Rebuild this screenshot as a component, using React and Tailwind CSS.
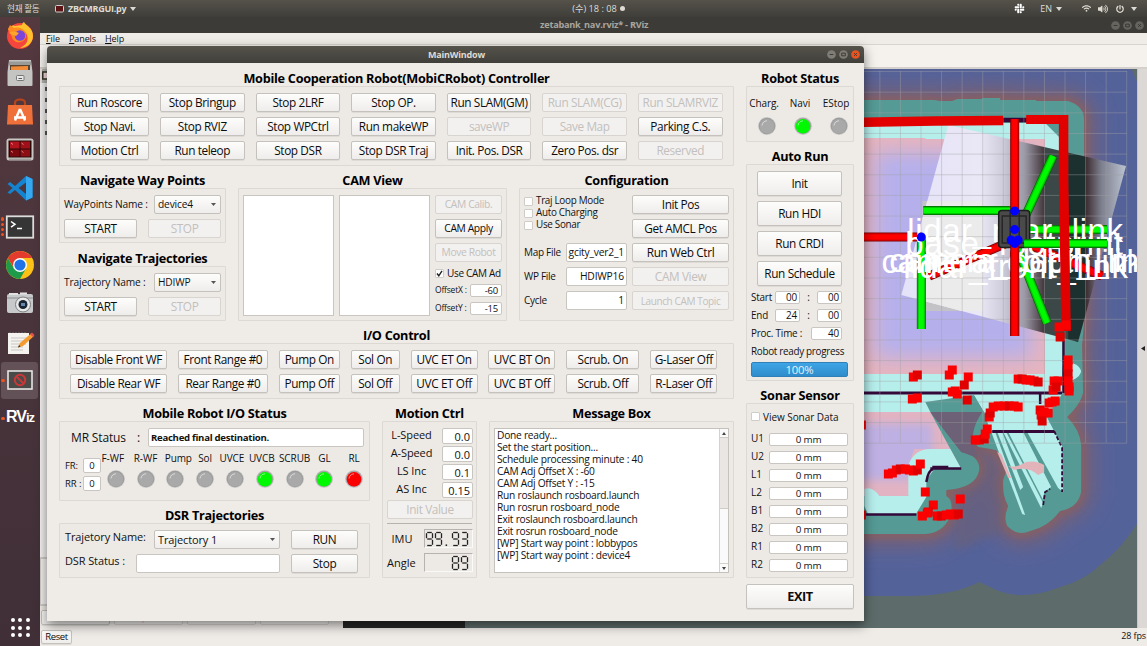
import React from "react";
import { FaSlack, FaPowerOff, FaVolumeUp, FaWifi } from "react-icons/fa";

/* ---------- small controls ---------- */

function Title({ children, className = "" }) {
  return (
    <div className={"h-4 leading-[17.500px] text-center font-bold text-[12.700px] tracking-[-0.280px] text-black whitespace-nowrap " + className}>
      {children}
    </div>
  );
}

function Frame({ children, className = "" }) {
  return <div className={"border border-[#dcd9d5] bg-[#edeae6] rounded-[1px] " + className}>{children}</div>;
}

function Btn({ children, off, className = "" }) {
  const size = /(^|\s)h-/.test(className) ? "" : "h-[19px] ";
  const font = /text-\[/.test(className) ? "" : "text-[11.8px] ";
  return (
    <button
      className={
        "flex shrink-0 items-center justify-center whitespace-nowrap rounded-[2px] border leading-none tracking-[-0.380px] " +
        size +
        font +
        (off
          ? "border-[#d8d5d1] bg-[#f3f1ef] text-[#c2c0bd] "
          : "border-[#c5c2be] bg-gradient-to-b from-[#fdfdfc] to-[#efedeb] text-[#0c0c0c] shadow-[0_1px_0_#dedbd7] ") +
        className
      }
    >
      {children}
    </button>
  );
}

function Field({ children, className = "" }) {
  return (
    <div
      className={
        "flex shrink-0 items-center overflow-hidden whitespace-nowrap rounded-[2px] border border-[#c9c6c2] bg-white leading-none text-[#111] " +
        className
      }
    >
      {children}
    </div>
  );
}

function Select({ children, className = "" }) {
  return (
    <div
      className={
        "flex h-[19px] shrink-0 items-center justify-between whitespace-nowrap rounded-[2px] border border-[#c5c2be] bg-gradient-to-b from-[#fdfdfc] to-[#efedeb] pl-[3px] pr-1 leading-none text-[#111] " +
        className
      }
    >
      <span>{children}</span>
      <svg width="5" height="3" viewBox="0 0 5 3">
        <path d="M0 0h5L2.5 3z" fill="#555" />
      </svg>
    </div>
  );
}

function Check({ children, on, className = "" }) {
  return (
    <div className={"flex items-center whitespace-nowrap leading-none text-[#111] " + className}>
      <span className="mr-[3px] flex h-[9px] w-[9px] shrink-0 items-center justify-center rounded-[1px] border border-[#d0cdc9] bg-white">
        {on && (
          <svg width="7" height="7" viewBox="0 0 7 7">
            <path d="M1 3.5L2.8 5.8L6 .8" fill="none" stroke="#222" strokeWidth="1.4" />
          </svg>
        )}
      </span>
      {children}
    </div>
  );
}

const LED = { gray: "#a9a9a9", green: "#00f800", red: "#fb0000" };

function Led({ c = "gray" }) {
  return (
    <svg width="20" height="20" viewBox="0 0 20 20" className="shrink-0">
      <circle cx="10" cy="10" r="9" fill="#cfcecc" />
      <circle cx="10" cy="10" r="8.3" fill={c === "gray" ? "#9c9c9c" : "#a8a4a8"} />
      <circle cx="10" cy="10.3" r="7.3" fill={LED[c]} />
      <path d="M5 9.5C5.4 6.5 7.5 5 10 4.8" fill="none" stroke="#fff" strokeOpacity=".55" strokeWidth="1" />
    </svg>
  );
}

const SEG = {
  a: "M1.2 .5h4.6",
  b: "M6.5 1.2v5",
  c: "M6.5 7.8v5",
  d: "M1.2 13.5h4.6",
  e: "M.5 7.8v5",
  f: "M.5 1.2v5",
  g: "M1.2 7h4.6",
};
const DIGIT = { 9: "abcdfg", 3: "abcdg", 8: "abcdefg" };

function Lcd({ value }) {
  return (
    <div className="flex h-[19px] w-[49px] items-center justify-end gap-[1.8px] border border-b-[#fafafa] border-r-[#fafafa] border-l-[#b5b2af] border-t-[#b5b2af] pr-1">
      {value.split("").map((ch, i) => (
        <svg key={i} width="7" height="14" viewBox="0 0 7 14" className="overflow-visible">
          {ch === "." ? (
            <rect x="2.6" y="12.4" width="1.5" height="1.6" fill="#222" />
          ) : (
            DIGIT[ch].split("").map((s) => <path key={s} d={SEG[s]} stroke="#222" strokeWidth="1.3" />)
          )}
        </svg>
      ))}
    </div>
  );
}

/* ---------- desktop chrome ---------- */

function Caret() {
  return (
    <svg width="6" height="4" viewBox="0 0 6 4">
      <path d="M0 0h6L3 4z" fill="#dcdad6" />
    </svg>
  );
}

function TopBar() {
  return (
    <div className="flex h-[17px] shrink-0 items-center bg-gradient-to-b from-[#55524a] to-[#3f3e39] text-[9px] leading-none text-[#dfdbd2]">
      <span className="ml-[7px] w-[48px] whitespace-nowrap font-['Noto_Sans_CJK_KR'] text-[8.600px] tracking-[-0.200px]">현재 활동</span>
      <svg width="9" height="8" viewBox="0 0 9 8">
        <rect x=".5" y=".5" width="8" height="6.5" rx="1" fill="#5c1414" stroke="#d0d0d0" />
      </svg>
      <span className="ml-1 mr-1 text-[9px] font-bold tracking-[-0.250px]">ZBCMRGUI.py</span>
      <Caret />
      <span className="ml-[436px] whitespace-nowrap font-['Open_Sans','Noto_Sans_CJK_KR'] text-[9.2px]">(수) 18 : 08</span>
      <span className="ml-[3px] h-[5px] w-[5px] rounded-full bg-[#dfdbd2]" />
      <span className="flex-1" />
      <FaSlack size={11} color="#fff" />
      <span className="ml-[15px] mr-1">EN</span>
      <Caret />
      <FaWifi size={9} className="ml-5" />
      <FaVolumeUp size={10} className="ml-[7px]" />
      <FaPowerOff size={8} className="ml-[8px] mr-[7px]" />
      <Caret />
      <span className="w-[10px]" />
    </div>
  );
}

const ICONS = [
  <g key="firefox">
    <circle cx="14" cy="15" r="13" fill="#f4463c" />
    <path d="M2 9C4 4 8 4 9 5L16 4C16 2 18 1 18 1C20 5 27 7 27 15C27 22 21 27 14 27C20 24 23 20 21 14C19 8 10 6 2 9z" fill="#ffc02e" />
    <path d="M2 8L4 4L8 7C14 5 21 9 20 16C17 24 7 22 6 16z" fill="#ff8a1f" />
    <circle cx="14" cy="14.5" r="5.3" fill="#7a45d8" />
    <path d="M3 12C7 9 10 11 13 12L10 15L7 14z" fill="#ffa52c" />
  </g>,
  <g key="files">
    <path d="M3 1h22l1.5 12v13a1 1 0 0 1-1 1h-23a1 1 0 0 1-1-1v-13z" fill="#c2c2c0" />
    <path d="M3 2.500h22v4h-22z" fill="#9a9a98" />
    <path d="M4 6h20v6h-20z" fill="#5b4432" />
    <path d="M5 7.500l17-.5v4h-17z" fill="#f28c38" />
    <path d="M2 11h24v15h-24z" fill="#c4c4c2" />
    <rect x="10.500" y="16.500" width="7.500" height="5" rx="1" fill="#e8e8e8" stroke="#777" />
    <path d="M12.500 19.500h3.500" stroke="#555" />
  </g>,
  <g key="software">
    <path d="M9 9V5Q9 1.5 14 1.5T19 5V9" fill="none" stroke="#b8441c" strokeWidth="2.2" />
    <path d="M2 7h24l1 19.500h-26z" fill="#f0703a" />
    <path d="M14 11l-5 11.500M14 11l5 11.500M8 19.500h12" fill="none" stroke="#fff" strokeWidth="2.4" />
  </g>,
  <g key="terminator">
    <rect x=".5" y="2.500" width="27" height="22" rx="2.500" fill="#c9c7c3" />
    <rect x="2.500" y="4.500" width="23" height="17" fill="#2a0808" />
    <rect x="4" y="5.500" width="9.500" height="7" fill="#b0141e" />
    <rect x="14.500" y="5.500" width="9.500" height="7" fill="#a01018" />
    <rect x="4" y="13.500" width="9.500" height="7" fill="#7a0a10" />
    <rect x="14.500" y="13.500" width="9.500" height="7" fill="#8e0e16" />
    <path d="M5 7l2 1.500M15.500 7l2 1.500M5 15l2 1.500M15.500 15l2 1.500" stroke="#f99" strokeWidth=".8" />
    <path d="M3 23.200h22" stroke="#7d7b78" strokeWidth=".8" />
  </g>,
  <g key="vscode">
    <path d="M20 2L26.500 5V23.500L20 26.500L9 16L4 20L1.500 18.500L6.500 14L1.500 10L4 8L9 12z" fill="#1484d0" />
    <path d="M20 8.500V20L12.500 14z" fill="#4b353c" />
    <path d="M20 2L26.500 5V23.500L20 26.500z" fill="#35a8ef" />
  </g>,
  <g key="terminal">
    <rect x=".8" y="3.300" width="26.400" height="21.400" fill="#353535" stroke="#dcdcda" strokeWidth="1.800" />
    <path d="M5 8.500l4 2.800l-4 2.800M11 15.500h5" fill="none" stroke="#fff" strokeWidth="1.500" />
  </g>,
  <g key="chrome">
    <circle cx="14" cy="14" r="14" fill="#fbc116" />
    <path d="M1.900 7A14 14 0 0 0 14 28L20 17.500L14 14L8 17.500z" fill="#1e9a4b" />
    <path d="M14 7H26.100A14 14 0 0 0 1.900 7L8 17z" fill="#e33b2e" />
    <circle cx="14" cy="14" r="7" fill="#fff" />
    <circle cx="14" cy="14" r="5.600" fill="#1f72e8" />
  </g>,
  <g key="camera">
    <rect x="1" y="5" width="26" height="19" rx="2" fill="#c7c9cb" />
    <path d="M3 4h9v2h-9zM14 3.500h7v2h-7z" fill="#e2e2e2" />
    <path d="M1 9h26" stroke="#8c8e90" />
    <circle cx="17" cy="15.500" r="7.500" fill="#e8e9ea" stroke="#7d7d7d" />
    <circle cx="17" cy="15.500" r="4.500" fill="#1c2630" />
    <rect x="15" y="14" width="4" height="3" fill="#6488b0" />
  </g>,
  <g key="notes">
    <rect x="2" y="5" width="21" height="21" fill="#f4f3ef" />
    <path d="M4 5v-1M7 5v-1M10 5v-1M13 5v-1M16 5v-1M19 5v-1" stroke="#777" strokeWidth="1" />
    <path d="M5 10h15M5 13h15M5 16h15M5 19h12M5 22h12" stroke="#c5c3bf" strokeWidth=".9" />
    <path d="M12 19.500L14 15L25 5.500L28 8L17 18z" fill="#f59a2e" />
    <path d="M24 6.300L26 4.500L28.500 7L27 9z" fill="#e05050" />
    <path d="M12 19.500l1-2.400l1.600 1.500z" fill="#333" />
  </g>,
  <g key="denied">
    <rect x="2" y="5" width="24" height="18" fill="#4a4a48" stroke="#f0efed" strokeWidth="1.500" />
    <circle cx="14" cy="14" r="5.200" fill="none" stroke="#c83838" strokeWidth="2" />
    <path d="M10.500 10.500l7 7" stroke="#c83838" strokeWidth="2" />
  </g>,
];

function Dock() {
  return (
    <div className="flex w-10 shrink-0 flex-col bg-gradient-to-b from-[#54393f] via-[#49343b] to-[#402f37] pb-[9px]">
      {ICONS.map((icon, i) => (
        <div key={i} className="relative flex h-[38.3px] shrink-0 items-center justify-center">
          {i === 9 && <span className="absolute left-[1px] top-0 h-[37px] w-[37px] rounded-[3px] bg-white/15" />}
          <svg width="28" height="28" viewBox="0 0 28 28" className="relative -mt-[2px] overflow-visible">
            {icon}
          </svg>
          {i === 5 && (
            <span className="absolute left-[1px] top-[9px] flex flex-col gap-[2px]">
              {[0, 1, 2, 3].map((k) => (
                <span key={k} className="h-[3.200px] w-[3.200px] rounded-full bg-[#e95420]" />
              ))}
            </span>
          )}
          {i === 9 && <span className="absolute left-[1px] top-[17px] h-[3.500px] w-[3.500px] rounded-full bg-[#e95420]" />}
        </div>
      ))}
      <div className="relative flex h-[38px] shrink-0 items-center justify-center">
        <span className="absolute left-[1px] top-[17px] h-[3.500px] w-[3.500px] rounded-full bg-[#e95420]" />
        <span className="-mt-1 font-['Liberation_Sans'] text-[16px] font-bold leading-none tracking-[-1px] text-white">
          RV<span className="text-[13px]">iz</span>
        </span>
      </div>
      <div className="flex-1" />
      <div className="mx-auto grid grid-cols-3 gap-x-[3.500px] gap-y-[3.500px]">
        {Array.from({ length: 9 }, (_, k) => (
          <span key={k} className="h-[4px] w-[4px] rounded-full bg-white" />
        ))}
      </div>
    </div>
  );
}

function WinButtons({ live }) {
  return (
    <div className="flex items-center gap-[3px]">
      {["M3 5h4", "M3 3.500h4v3h-4z", "M3.500 3.500l3 3M6.500 3.500l-3 3"].map((d, i) => (
        <svg key={i} width="9" height="9" viewBox="0 0 10 10">
          <circle cx="5" cy="5" r="4.800" fill={live && i === 2 ? "#e8541f" : live ? "#7f7d76" : "#66645f"} />
          <path d={d} fill="none" stroke="#35342f" strokeWidth="1" />
        </svg>
      ))}
    </div>
  );
}

/* ---------- 3D map ---------- */

const PTS = [
  [913, 377], [917, 375], [949, 375], [952, 370], [968, 377], [964, 385], [952, 392], [957, 394], [955, 391], [967, 400],
  [912, 399], [917, 398],
  [1018, 379], [1022, 379], [1026, 380], [1030, 380], [1034, 381], [1038, 382],
  [1054, 381], [1058, 381], [1053, 390], [1056, 387],
  [1049, 403], [1052, 402], [1055, 401], [1040, 410], [1044, 412], [1048, 413], [1041, 415], [1042, 421],
  [888, 474], [892, 473], [896, 470], [900, 469], [905, 469], [909, 470], [913, 471], [917, 470], [920, 464],
  [925, 492], [933, 505], [928, 512], [922, 516], [927, 513], [937, 516], [941, 516], [946, 515], [950, 514], [954, 515], [958, 514], [960, 499],
  [975, 440], [979, 440], [984, 439], [987, 429], [985, 434], [989, 417], [990, 413], [993, 407], [998, 406], [1004, 406], [1009, 406], [1014, 406], [1018, 407],
  [1059, 327], [1060, 337], [1066, 325], [1068, 360], [1068, 367], [1068, 374], [1068, 381], [1069, 387], [1069, 391],
  [861, 515], [861, 425],
];

function Axis({ x1, y1, x2, y2, c }) {
  return (
    <g>
      <line x1={x1} y1={y1} x2={x2} y2={y2} stroke={c === "r" ? "#7a0000" : "#006400"} strokeWidth="9" />
      <line x1={x1} y1={y1} x2={x2} y2={y2} stroke={c === "r" ? "#d80000" : "#00c800"} strokeWidth="7.600" />
      <line x1={x1} y1={y1} x2={x2} y2={y2} stroke={c === "r" ? "#ff0000" : "#00fa00"} strokeWidth="5" />
    </g>
  );
}

const TEAL =
  "M400 100H934L940 101H952L957 99H982V98H1000V100H1036V101H1068Q1084 106 1084 120V322L1082 345L1083 393Q1080 405 1067 417Q1080 430 1081 445V492Q1078 508 1060 511Q1048 527 1030 531Q1018 537 1007 526Q1003 518 1008 506Q1002 496 1003 480Q1006 470 1008 468L996 450Q976 447 973 434Q974 418 985 412H930L961 452Q980 456 979 470Q976 488 946 490V496Q954 500 950 516Q943 533 925 534H400z";

function MapView() {
  return (
    <svg className="block h-[559px] w-full" viewBox="464 69 673 559" preserveAspectRatio="none">
      <defs>
        <filter id="soft" x="-10%" y="-10%" width="120%" height="120%">
          <feGaussianBlur stdDeviation="10" />
        </filter>
        <filter id="soft2" x="-20%" y="-20%" width="140%" height="140%">
          <feGaussianBlur stdDeviation="4" />
        </filter>
        <linearGradient id="cam" gradientUnits="userSpaceOnUse" x1="901" x2="1126" y1="0" y2="0">
          <stop offset="0" stopColor="#e4e2f8" />
          <stop offset=".35" stopColor="#eae8f6" />
          <stop offset=".45" stopColor="#cfcddc" />
          <stop offset=".55" stopColor="#9b98a6" />
          <stop offset=".635" stopColor="#43373c" />
          <stop offset=".64" stopColor="#3b4847" />
          <stop offset=".74" stopColor="#3b4847" />
          <stop offset=".745" stopColor="#1c302f" />
          <stop offset=".815" stopColor="#1c302f" />
          <stop offset=".82" stopColor="#3a2a2e" />
          <stop offset=".89" stopColor="#7d7f8e" />
          <stop offset="1" stopColor="#bcc3d0" />
        </linearGradient>
        <clipPath id="quad">
          <path d="M948 125L1126 166L1078 342L901 295z" />
        </clipPath>
        <clipPath id="blueArea">
          <path d="M400 60H1128L1137 82V524Q1120 550 1100 565Q1085 580 1060 587Q1022 602 994 589L979 582Q950 597 900 596H400z" />
        </clipPath>
        <clipPath id="room">
          <path d="M850 138H925V139H1045V374H850z" />
        </clipPath>
        <clipPath id="room2">
          <path d="M850 412H930L961 469L930 449H914L908 466V496L880 493L870 488H850z" />
        </clipPath>
      </defs>
      <rect x="464" y="69" width="673" height="559" fill="#5d6c6a" />
      <g clipPath="url(#blueArea)">
        <rect x="464" y="69" width="673" height="559" fill="#54629a" />
        <path d={TEAL} fill="#75627a" stroke="#75627a" strokeWidth="26" filter="url(#soft)" />
        <path d="M930 412H985V440L1003 475V530L960 550H955V490L978 470L961 452z" fill="#69617c" opacity=".7" filter="url(#soft2)" />
        <path d={TEAL} fill="none" stroke="#965f50" strokeWidth="7" opacity=".75" filter="url(#soft2)" />
      </g>
      <path d={TEAL} fill="#559a95" />
      {/* corridor between the walls and the free space */}
      <path d="M850 123H1045L1062 140V395H1045V412H850z" fill="#b6eeec" />
      <g clipPath="url(#room)">
        <rect x="850" y="138" width="195" height="236" fill="#e6b4be" />
        <rect x="874" y="152" width="158" height="206" fill="#b5b0ec" filter="url(#soft)" />
      </g>
      <path d="M850 374H1062V394L1050 412H985L974 395L925 402L931 412H850z" fill="#b6eeec" />
      <path d="M925 402L974 395L984 412H930z" fill="#559a95" />
      <path d="M930 412H984L979 425L974 440V448L978 458L961 452z" fill="#6c6176" />
      <path d="M982 412Q966 436 978 447L997 450L987 412z" fill="#559a95" />
      <path d="M850 412H930L961 469L930 449L908 496H850z" fill="#e2b3c2" />
      <g clipPath="url(#room2)">
        <rect x="850" y="424" width="82" height="56" fill="#beb0e2" filter="url(#soft2)" />
      </g>
      <path d="M908 465Q914 449 930 449H950L961 469H934L926 480V497L915 515H868L864 506V489Q872 486 879 496H908z" fill="#b6eeec" />
      {/* side room with the radial scan stripes */}
      <path d="M984 412L974 395H1040L1043 410L1054 431H990z" fill="#b6eeec" />
      <g fill="#b6eeec">
        <path d="M991 432H995L1025 515L1022 514z" />
        <path d="M997 432H1002L1023 487L1020 490z" />
        <path d="M1003 432H1006L1043 503L1041 508z" />
        <path d="M1008 432H1023L1051 487L1044 492L1043 500z" />
        <path d="M1027 432L1054 431L1062 446L1063 492L1058 488z" />
      </g>
      <path d="M997 452L1001 454L1011 478L1008 478z" fill="#e2b3b8" />
      <path d="M1008 466Q1016 468 1026 462Q1036 460 1044 465V472L1038 475Q1028 466 1014 470z" fill="#e2b3b8" />
      <path d="M1062 362Q1080 362 1081 372Q1078 381 1064 381z" fill="#b6eeec" />
      {/* occupied cells */}
      <path d="M850 393H1062M992 431.500H1054" stroke="#35083a" strokeWidth="3" />
      <path d="M1063.500 340V393M1040 393V404" stroke="#35083a" strokeWidth="2.500" />
      <path d="M850 514.500H916M930 468.500H961M932 467H948M926 482Q928 470 933 469" fill="none" stroke="#35083a" strokeWidth="2.500" />
      <path d="M1054 431L1062 448V492M1043 505L1045 492L1050 489" fill="none" stroke="#35083a" strokeWidth="1.800" strokeDasharray="4 2" />
      <path d="M1000 120H1028" stroke="#35083a" strokeWidth="4.500" />
      {/* camera image plane */}
      <path d="M922 201H983V311H922z" fill="#c3c2c6" />
      <path d="M948 125L1126 166L1078 342L901 295z" fill="url(#cam)" />
      <g clipPath="url(#quad)">
        <rect x="922" y="201" width="61" height="110" fill="#ebebeb" />
      </g>
      {/* grid */}
      <g stroke="#a0a0a4" strokeOpacity=".45" strokeWidth=".9">
        {Array.from({ length: 13 }, (_, i) => (
          <line key={"v" + i} x1={879.500 + i * 20.600} x2={879.500 + i * 20.600} y1="71" y2="443" />
        ))}
        {Array.from({ length: 19 }, (_, i) => (
          <line key={"h" + i} x1="850" x2="1127" y1={71.500 + i * 20.650} y2={71.500 + i * 20.650} />
        ))}
      </g>
      {/* frames */}
      <Axis c="g" x1={1014} y1={240} x2={1053} y2={156} />
      <Axis c="g" x1={1014} y1={240} x2={1047} y2={323} />
      <Axis c="r" x1={1014} y1={240} x2={929} y2={276} />
      <Axis c="r" x1={1014} y1={238} x2={1102} y2={276} />
      <Axis c="r" x1={850} y1={237} x2={921} y2={237} />
      <Axis c="g" x1={921} y1={237} x2={921} y2={329} />
      <Axis c="g" x1={923} y1={210.500} x2={1014} y2={210.500} />
      <Axis c="g" x1={1014} y1={229.500} x2={1107} y2={229.500} />
      <Axis c="r" x1={1014.500} y1={119} x2={1014.500} y2={336} />
      <g fill="#fff" fontFamily="Liberation Sans, Arial, sans-serif" fontSize="33">
        <text x="907" y="242" textLength="216">lidar_rear_link</text>
        <text x="905" y="255" textLength="218">base_footprint</text>
        <text x="881" y="273" textLength="262">camera_color_link</text>
        <text x="889" y="272" textLength="250">camera_depth_lin</text>
        <text x="903" y="278" textLength="225">lidar_front_link</text>
      </g>
      <rect x="998.500" y="210.500" width="31" height="37" rx="3" fill="#4a4a4a" stroke="#1e1e1e" strokeWidth="1.500" />
      <path d="M1002 216H1026V243H1002zM1010 211V245M1019 211V245" fill="none" stroke="#262626" strokeWidth="1.500" />
      <Axis c="g" x1={1024} y1={243.500} x2={1107} y2={243.500} />
      <Axis c="r" x1={1014.500} y1={242} x2={1014.500} y2={336} />
      {/* laser hits */}
      <path d="M850 122.500L935 121L1003 120.500" stroke="#e20000" strokeWidth="9.500" />
      <path d="M1026 119.500H1067" stroke="#e60000" strokeWidth="9" />
      <path d="M1063.500 115V180L1066 331" fill="none" stroke="#e00000" strokeWidth="9.500" />
      {PTS.map(([x, y], i) => (
        <rect key={i} x={x - 4.500} y={y - 4.500} width="9" height="9" fill={i % 4 === 1 ? "#e00000" : "#fb0000"} />
      ))}
      <g fill="#0000ff">
        <circle cx="1014.500" cy="211" r="4.500" />
        <circle cx="1014.500" cy="229.500" r="4.500" />
        <circle cx="1011" cy="240" r="4.500" />
        <circle cx="1018" cy="240" r="4.500" />
        <circle cx="1014.500" cy="243.500" r="4.500" />
        <circle cx="921" cy="237" r="4.500" />
      </g>
    </svg>
  );
}

/* ---------- RViz window in the background ---------- */

function RViz() {
  return (
    <div className="flex min-w-0 flex-1 flex-col bg-[#efebe7]">
      <div className="flex h-4 shrink-0 items-center bg-[#3c3b37] text-[9.200px] font-bold leading-none tracking-[-0.250px] text-[#a8a59e]">
        <span className="ml-[500px]">zetabank_nav.rviz* - RViz</span>
        <span className="flex-1" />
        <WinButtons />
        <span className="w-[3px]" />
      </div>
      <div className="flex h-[12px] shrink-0 items-center gap-[9px] border-b border-[#d8d5d1] pl-[6px] text-[9px] leading-none tracking-[-0.080px] text-[#111]">
        <span><u>F</u>ile</span>
        <span><u>P</u>anels</span>
        <span><u>H</u>elp</span>
      </div>
      <div className="h-[24px] shrink-0 border-b-2 border-[#d4d0cc] bg-[#f5f2ee]" />
      <div className="flex h-[559px] shrink-0">
        <div className="flex w-[303px] shrink-0 flex-col bg-[#f2f0ee]">
          <div className="flex h-[14px] items-center border-l-2 border-[#e5e2de] bg-[#b5b2ae]">
            <svg width="7" height="10" viewBox="0 0 7 10">
              <rect x=".8" y="1" width="8" height="7" fill="#f3dede" stroke="#332" strokeWidth="1.500" />
            </svg>
          </div>
          <div className="flex flex-col gap-[7px] pl-[5px] pt-1">
            {[0, 1, 2, 3, 4].map((k) => (
              <span key={k} className="h-[4px] w-[2px] bg-[#555]" />
            ))}
          </div>
          <div className="flex-1" />
          <div className="h-[49px] border-y-2 border-l border-[#cfccc8]" />
          <div className="flex h-[22px] items-center gap-1 bg-[#efebe7] pl-[1px] text-[9px]">
            <Btn className="h-[15px] w-[69px] text-[9px]">Add</Btn>
            <Btn off className="h-[15px] w-[69px] text-[9px]">Duplicate</Btn>
            <Btn off className="h-[15px] w-[69px] text-[9px]">Remove</Btn>
            <Btn off className="h-[15px] w-[69px] text-[9px]">Rename</Btn>
          </div>
        </div>
        <div className="w-[122px] shrink-0 bg-[#262626]" />
        <div className="w-[672px] shrink-0">
          <MapView />
        </div>
        <div className="flex flex-1 items-center justify-center border-l border-[#c9c6c2] bg-[#dcd8d5]">
          <svg width="4" height="5" viewBox="0 0 4 5">
            <path d="M4 0v5L0 2.500z" fill="#222" />
          </svg>
        </div>
      </div>
      <div className="flex flex-1 items-center pl-[1px] text-[9px] leading-none text-[#111]">
        <Btn className="h-[14px] w-[31px] text-[9.500px]">Reset</Btn>
        <span className="flex-1" />
        <span className="mr-[1px] mb-[3px] text-[9px] tracking-[-0.100px]">28 fps</span>
      </div>
    </div>
  );
}

/* ---------- controller window ---------- */

const COMMANDS = [
  ["Run Roscore", "Stop Bringup", "Stop 2LRF", "Stop OP.", "Run SLAM(GM)", "-Run SLAM(CG)", "-Run SLAMRVIZ"],
  ["Stop Navi.", "Stop RVIZ", "Stop WPCtrl", "Run makeWP", "-saveWP", "-Save Map", "Parking C.S."],
  ["Motion Ctrl", "Run teleop", "Stop DSR", "Stop DSR Traj", "Init. Pos. DSR", "Zero Pos. dsr", "-Reserved"],
];

function Commands() {
  return (
    <Frame className="flex h-[80px] flex-col gap-[5px] pl-[10px] pt-[6px]">
      {COMMANDS.map((row, r) => (
        <div key={r} className="flex gap-[11px]">
          {row.map((t, i) => (
            <Btn key={t} off={t[0] === "-"} className={i === 0 ? "w-[79px]" : "w-[84.600px]"}>
              {t.replace(/^-/, "")}
            </Btn>
          ))}
        </div>
      ))}
    </Frame>
  );
}

function Navigate({ label, value }) {
  return (
    <Frame className="flex h-[55px] flex-col gap-[5px] pl-[4px] pt-[6px]">
      <div className="flex w-[157px] items-center justify-between text-[10.200px] tracking-[-0.150px] text-[#111]">
        <span className="whitespace-nowrap">{label}</span>
        <Select className="w-[67px]">{value}</Select>
      </div>
      <div className="flex gap-[11px]">
        <Btn className="w-[73px]">START</Btn>
        <Btn off className="w-[73px]">STOP</Btn>
      </div>
    </Frame>
  );
}

function CamView() {
  return (
    <Frame className="flex h-[133px] gap-[5px] pl-1 pt-[6px]">
      <div className="h-[121px] w-[91px] border border-[#c9c6c2] bg-white" />
      <div className="h-[121px] w-[91px] border border-[#c9c6c2] bg-white" />
      <div className="flex w-[67px] flex-col gap-[5px] text-[8.500px] text-[#111]">
        <Btn off className="w-[67px] text-[10.300px]">CAM Calib.</Btn>
        <Btn className="w-[67px] text-[10.300px]">CAM Apply</Btn>
        <Btn off className="w-[67px] text-[10.300px]">Move Robot</Btn>
        <Check on className="h-[12px] text-[10px] tracking-[-0.320px]">Use CAM Ad</Check>
        <div className="flex h-[13px] items-center justify-between whitespace-nowrap tracking-[-0.200px]">
          OffsetX : <Field className="h-[13px] w-[32px] justify-end pr-[3px] text-[9.500px]">-60</Field>
        </div>
        <div className="flex h-[13px] items-center justify-between whitespace-nowrap tracking-[-0.200px]">
          OffsetY : <Field className="h-[13px] w-[32px] justify-end pr-[3px] text-[9.500px]">-15</Field>
        </div>
      </div>
    </Frame>
  );
}

function Configuration() {
  return (
    <Frame className="flex h-[133px] justify-between pl-1 pr-[4px] pt-[6px]">
      <div className="flex w-[103px] flex-col text-[10px] tracking-[-0.300px] text-[#111]">
        <div className="flex h-[48px] flex-col text-[9.900px]">
          <Check className="h-[12px]">Traj Loop Mode</Check>
          <Check className="h-[12px]">Auto Charging</Check>
          <Check className="h-[12px]">Use Sonar</Check>
        </div>
        {[["Map File", "gcity_ver2_1"], ["WP File", "HDIWP16"], ["Cycle", "1"]].map(([k, v]) => (
          <div key={k} className="flex h-6 items-start justify-between whitespace-nowrap">
            <span className="leading-[18px]">{k}</span>
            <Field className="h-[19px] w-[61px] justify-end pr-[2px] text-[10.300px] tracking-[-0.200px]">{v}</Field>
          </div>
        ))}
      </div>
      <div className="flex flex-col gap-[5px]">
        <Btn className="w-[97px]">Init Pos</Btn>
        <Btn className="w-[97px]">Get AMCL Pos</Btn>
        <Btn className="w-[97px]">Run Web Ctrl</Btn>
        <Btn off className="w-[97px]">CAM View</Btn>
        <Btn off className="w-[97px] text-[10px]">Launch CAM Topic</Btn>
      </div>
    </Frame>
  );
}

const IO = [
  ["w-[97px]", "Disable Front WF", "Disable Rear WF"],
  ["w-[90px]", "Front Range #0", "Rear Range #0"],
  ["w-[61px]", "Pump On", "Pump Off"],
  ["w-[49px]", "Sol On", "Sol Off"],
  ["w-[67px]", "UVC ET On", "UVC ET Off"],
  ["w-[67px]", "UVC BT On", "UVC BT Off"],
  ["w-[73px]", "Scrub. On", "Scrub. Off"],
  ["w-[67px]", "G-Laser Off", "R-Laser Off"],
];

function IoControl() {
  return (
    <Frame className="flex h-[56px] gap-[10.900px] pl-[10px] pt-[6px]">
      {IO.map(([w, a, b]) => (
        <div key={a} className="flex flex-col gap-[5px]">
          <Btn className={w}>{a}</Btn>
          <Btn className={w}>{b}</Btn>
        </div>
      ))}
    </Frame>
  );
}

const STATUS = [
  ["F-WF", "gray", "pr-[6px]"],
  ["R-WF", "gray", ""],
  ["Pump", "gray", "pl-[6px]"],
  ["Sol", "gray", ""],
  ["UVCE", "gray", "pr-[6px]"],
  ["UVCB", "green", "pr-[6px]"],
  ["SCRUB", "gray", ""],
  ["GL", "green", ""],
  ["RL", "red", ""],
];

function RobotIo() {
  return (
    <Frame className="flex h-[80px] flex-col pl-[5px] pt-[6px]">
      <div className="flex h-[19px] items-center text-[12px] text-[#111]">
        <span className="w-[72px] pl-[6px] tracking-[-0.150px]">MR Status</span>
        <span className="w-[11px]">:</span>
        <Field className="h-[19px] w-[216px] pl-[2px] text-[9.600px] font-bold tracking-[-0.280px]">Reached final destination.</Field>
      </div>
      <div className="flex pt-[5px] text-[10px] leading-none tracking-[-0.080px] text-[#111]">
        <div className="flex w-[36px] flex-col gap-[3px] pt-[6px] text-[9.500px]">
          <div className="flex h-[15px] items-center justify-between">
            FR: <Field className="h-[15px] w-[18px] justify-center">0</Field>
          </div>
          <div className="flex h-[15px] items-center justify-between whitespace-nowrap">
            RR : <Field className="h-[15px] w-[18px] justify-center">0</Field>
          </div>
        </div>
        {STATUS.map(([t, c, pad]) => (
          <div key={t} className="flex w-[29.850px] flex-col items-center">
            <span className={"flex h-[12px] items-center whitespace-nowrap " + pad}>{t}</span>
            <span className="h-[5px]" />
            <Led c={c} />
          </div>
        ))}
      </div>
    </Frame>
  );
}

function DsrTraj() {
  return (
    <Frame className="flex h-[55px] flex-col gap-[5px] pl-[5px] pt-[6px] text-[11px] tracking-[-0.120px] text-[#111]">
      <div className="flex h-[19px] items-center">
        <span className="w-[89px] whitespace-nowrap pb-1">Trajetory Name:</span>
        <Select className="w-[126px]">Trajectory 1</Select>
        <Btn className="ml-[11px] w-[67px]">RUN</Btn>
      </div>
      <div className="flex h-[19px] items-center">
        <span className="w-[71px] whitespace-nowrap pb-1">DSR Status :</span>
        <Field className="h-[19px] w-[144px]" />
        <Btn className="ml-[11px] w-[67px]">Stop</Btn>
      </div>
    </Frame>
  );
}

function MotionCtrl() {
  return (
    <Frame className="flex h-[157px] flex-col pl-1 pt-[6px] text-[11px] text-[#111]">
      {[["L-Speed", "0.0"], ["A-Speed", "0.0"], ["LS Inc", "0.1"], ["AS Inc", "0.15"]].map(([k, v]) => (
        <div key={k} className="flex h-[18px] w-[86px] items-start justify-between">
          <span className="w-[49px] text-center leading-[14px] tracking-[-0.100px]">{k}</span>
          <Field className="h-[16px] w-[31px] justify-end pr-[2px]">{v}</Field>
        </div>
      ))}
      <Btn off className="w-[86px]">Init Value</Btn>
      <div className="mt-1 h-[6px] w-[85px] border-t border-[#b5b2af]" />
      <div className="flex h-6 w-[86px] items-start justify-between">
        <span className="w-[30px] text-center leading-[19px]">IMU</span>
        <Lcd value="99.93" />
      </div>
      <div className="flex h-6 w-[86px] items-start justify-between">
        <span className="leading-[19px]">Angle</span>
        <Lcd value="89" />
      </div>
    </Frame>
  );
}

const LOG = [
  "Done ready...",
  "Set the start position...",
  "Schedule processing minute : 40",
  "CAM Adj Offset X : -60",
  "CAM Adj Offset Y : -15",
  "Run roslaunch rosboard.launch",
  "Run rosrun rosboard_node",
  "Exit roslaunch rosboard.launch",
  "Exit rosrun rosboard_node",
  "[WP] Start way point : lobbypos",
  "[WP] Start way point : device4",
];

function MessageBox() {
  return (
    <Frame className="h-[157px] pl-1 pt-[6px]">
      <div className="flex h-[145px] w-[235px] border border-[#c5c2be] bg-white">
        <div className="flex-1 pl-[2px] text-[10.200px] leading-[12px] tracking-[-0.240px] text-[#111]">
          {LOG.map((l, i) => (
            <div key={i} className="whitespace-nowrap">{l}</div>
          ))}
        </div>
        <div className="flex w-[9px] flex-col items-center border-l border-[#d5d2ce] bg-[#fafafa]">
          <div className="flex h-[8px] items-center">
            <svg width="4" height="3" viewBox="0 0 4 3"><path d="M0 3h4L2 0z" fill="#444" /></svg>
          </div>
          <div className="h-[72px] w-full border-y border-[#cfccc8] bg-[#e9e6e3]" />
          <div className="w-full flex-1" />
          <div className="flex h-[9px] w-full items-center justify-center border-t border-[#d5d2ce]">
            <svg width="4" height="3" viewBox="0 0 4 3"><path d="M0 0h4L2 3z" fill="#444" /></svg>
          </div>
        </div>
      </div>
    </Frame>
  );
}

function RobotStatus() {
  return (
    <Frame className="flex h-[56px] pl-[2px] pt-[10px] text-[10px] leading-none tracking-[-0.080px] text-[#111]">
      {[["Charg.", "gray"], ["Navi", "green"], ["EStop", "gray"]].map(([t, c]) => (
        <div key={t} className="flex w-[36px] shrink-0 flex-col items-center gap-[8px]">
          <span className="flex h-[11px] items-center whitespace-nowrap pr-[6px]">{t}</span>
          <Led c={c} />
        </div>
      ))}
    </Frame>
  );
}

function AutoRun() {
  return (
    <Frame className="flex h-[217px] flex-col px-[4px] pt-[6px] text-[9.900px] leading-none tracking-[-0.200px] text-[#111]">
      <div className="flex flex-col gap-[5px] pl-[6px]">
        {["Init", "Run HDI", "Run CRDI", "Run Schedule"].map((t) => (
          <Btn key={t} className="h-[25px] w-[85px]">{t}</Btn>
        ))}
      </div>
      {[["Start", "00", "00"], ["End", "24", "00"]].map(([k, a, b], i) => (
        <div key={k} className={"flex h-[18px] items-start " + (i === 0 ? "mt-[5px]" : "")}>
          <span className="w-[24px] leading-[13px]">{k}</span>
          <Field className="h-[13px] w-[25px] justify-end pr-[2px]">{a}</Field>
          <span className="w-[17px] text-center leading-[13px]">:</span>
          <Field className="h-[13px] w-[25px] justify-end pr-[2px]">{b}</Field>
        </div>
      ))}
      <div className="flex h-[18px] items-start">
        <span className="w-[60px] whitespace-nowrap leading-[13px]">Proc. Time :</span>
        <Field className="h-[13px] w-[31px] justify-end pr-[2px]">40</Field>
      </div>
      <div className="h-[17px] whitespace-nowrap leading-[12px] tracking-[-0.300px]">Robot ready progress</div>
      <div className="flex h-[15px] w-[97px] items-center justify-center rounded-[2px] border border-[#2f7fb8] bg-gradient-to-b from-[#3ea5e6] to-[#2f8ccb] text-[11.300px] text-[#e8f2fa]">
        100%
      </div>
    </Frame>
  );
}

function Sonar() {
  return (
    <Frame className="flex h-[175px] flex-col px-[4px] pt-[7px] text-[10px] leading-none text-[#111]">
      <Check className="mb-[10.500px] h-[13px] tracking-[-0.050px]">View Sonar Data</Check>
      {["U1", "U2", "L1", "L2", "B1", "B2", "R1", "R2"].map((k) => (
        <div key={k} className="flex h-[18px] shrink-0 items-start">
          <span className="w-[18px] leading-[11px]">{k}</span>
          <Field className="h-[13px] w-[79px] justify-center text-[9.800px] tracking-[-0.150px]">0 mm</Field>
        </div>
      ))}
    </Frame>
  );
}

function MainWindow() {
  return (
    <div className="absolute left-[47px] top-[46px] flex h-[575px] w-[817px] flex-col rounded-t-[4px] bg-[#efebe7] shadow-[0_4px_12px_rgba(0,0,0,0.5)]">
      <div className="flex h-[17px] shrink-0 items-center rounded-t-[4px] bg-gradient-to-b from-[#55534b] to-[#403f3a] text-[9px] font-bold leading-none text-[#dfdbd2]">
        <span className="ml-[381px] tracking-[-0.200px]">MainWindow</span>
        <span className="flex-1" />
        <WinButtons live />
        <span className="w-1" />
      </div>
      <div className="flex gap-3 pl-[12px] pt-[7px]">
        <div className="flex w-[675px] flex-col">
          <Title>Mobile Cooperation Robot(MobiCRobot) Controller</Title>
          <Commands />
          <div className="mt-[6px] flex gap-3">
            <div className="flex w-[167px] flex-col">
              <Title>Navigate Way Points</Title>
              <Navigate label="WayPoints Name :" value="device4" />
              <Title className="mt-[7px]">Navigate Trajectories</Title>
              <Navigate label="Trajectory Name :" value="HDIWP" />
            </div>
            <div className="w-[269px]">
              <Title>CAM View</Title>
              <CamView />
            </div>
            <div className="w-[215px]">
              <Title>Configuration</Title>
              <Configuration />
            </div>
          </div>
          <Title className="mt-[6px]">I/O Control</Title>
          <IoControl />
          <div className="mt-[6px] flex gap-3">
            <div className="flex w-[311px] flex-col">
              <Title>Mobile Robot I/O Status</Title>
              <RobotIo />
              <Title className="mt-[6px]">DSR Trajectories</Title>
              <DsrTraj />
            </div>
            <div className="w-[95px]">
              <Title>Motion Ctrl</Title>
              <MotionCtrl />
            </div>
            <div className="w-[245px]">
              <Title>Message Box</Title>
              <MessageBox />
            </div>
          </div>
        </div>
        <div className="flex w-[108px] flex-col">
          <Title>Robot Status</Title>
          <RobotStatus />
          <Title className="mt-[6px]">Auto Run</Title>
          <AutoRun />
          <Title className="mt-[6px]">Sonar Sensor</Title>
          <Sonar />
          <Btn className="mt-[6px] h-[25px] w-[108px] text-[12.700px] font-bold">EXIT</Btn>
        </div>
      </div>
    </div>
  );
}

export default function App() {
  return (
    <div className="relative flex h-[646px] w-[1147px] flex-col overflow-hidden font-['Open_Sans','Noto_Sans','Noto_Sans_CJK_KR',sans-serif]">
      <TopBar />
      <div className="flex min-h-0 flex-1">
        <Dock />
        <RViz />
      </div>
      <MainWindow />
    </div>
  );
}
